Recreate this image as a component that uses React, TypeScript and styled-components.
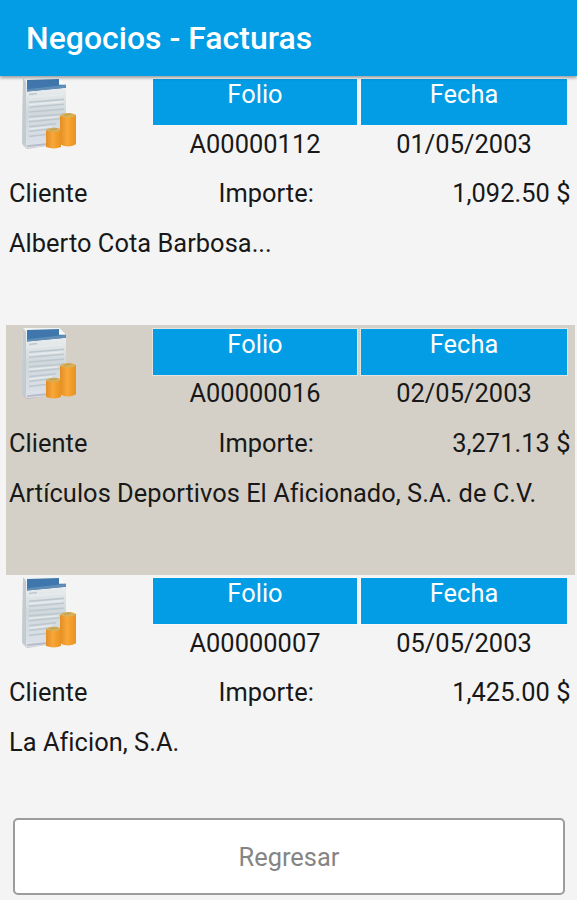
import React from "react";
import styled, { createGlobalStyle } from "styled-components";

const GlobalStyle = createGlobalStyle`
  html, body { margin: 0; padding: 0; background: #f4f4f4; }
  body { overflow: hidden; }
  *, *::before, *::after { box-sizing: border-box; }
`;

const Screen = styled.main`
  display: flex;
  flex-direction: column;
  height: 900px;
  overflow: hidden;
  background: #f4f4f4;
  color: #181818;
  font-family: Roboto, "Liberation Sans", sans-serif;
  font-size: 25.4px;
  letter-spacing: 0.04px;
  line-height: 30px;
`;

const AppBar = styled.header`
  display: flex;
  align-items: center;
  flex: none;
  height: 75.5px;
  padding: 0 26px;
  background: #029de4;
  box-shadow: 0 2px 3px rgba(0, 0, 0, 0.35);
  z-index: 1;
`;

const Title = styled.h1`
  margin: 0;
  color: #fff;
  font-size: 31.9px;
  font-weight: 500;
  line-height: 40px;
`;

const List = styled.section`
  flex: none;
`;

const Record = styled.article<{ $selected?: boolean }>`
  height: 249.5px;
  margin: 0 2px 0 6px;
  padding-top: 3.5px;
  background: ${(p) => (p.$selected ? "#d4d0c8" : "transparent")};
`;

const Summary = styled.div`
  display: grid;
  grid-template-columns: 143px 204px 206px;
  grid-template-rows: 46px 49px;
  column-gap: 4px;
`;

const IconCell = styled.div`
  grid-row: 1 / 3;
  padding-left: 14px;

  svg {
    display: block;
    margin-top: -3px;
  }
`;

const HeadCell = styled.div`
  text-align: center;
  color: #fff;
  background: #029de4;
  box-shadow: 0 0 0 1px rgba(255, 255, 255, 0.4);
`;

const ValueCell = styled.div`
  padding-top: 3.5px;
  text-align: center;
`;

const AmountRow = styled.div`
  display: grid;
  grid-template-columns: 209.5px 120px 1fr;
  padding: 4px 4.5px 0 3px;
`;

const Amount = styled.span`
  text-align: right;
`;

const Client = styled.div`
  padding: 20px 0 0 3px;
  white-space: nowrap;
`;

const BackButton = styled.button`
  flex: none;
  height: 77px;
  margin: -6px 12px 0 13px;
  padding: 0;
  border: 2px solid #9c9c9c;
  border-radius: 5px;
  background: #fff;
  color: #858585;
  font: inherit;
  letter-spacing: inherit;
`;

const InvoiceIcon = () => (
  <svg width="64" height="74" viewBox="0 0 64 76" preserveAspectRatio="none" aria-hidden="true">
    <defs>
      <linearGradient id="paper" x1="0" y1="0" x2="0" y2="1">
        <stop offset="0" stopColor="#f3f5f5" />
        <stop offset="0.5" stopColor="#d0d8dc" />
        <stop offset="1" stopColor="#dde1ea" />
      </linearGradient>
      <linearGradient id="coins" x1="0" y1="0" x2="1" y2="0">
        <stop offset="0" stopColor="#e18f26" />
        <stop offset="0.45" stopColor="#f9a738" />
        <stop offset="1" stopColor="#e8921f" />
      </linearGradient>
    </defs>
    <path d="M2 70 7 75 26 72 26 66Z" fill="#a9acb2" opacity=".65" />
    <path d="M3 2H39L46 9V70L7 74 2 69Z" fill="url(#paper)" />
    <path d="M3 2 6 6V73L2 69Z" fill="#c3cbd0" />
    <path d="M39 2V9H46Z" fill="#f9faf9" />
    <path d="M7 4 39 3V9H46V12L7 16Z" fill="#3f77ac" />
    <path d="M7 13.5 46 9V12L7 16Z" fill="#5f8db5" />
    <path d="M9 19 17 18M9 27 44 24M9 32 44 29M9 37 44 34M9 42 44 39M9 47 40 44M9 52 36 49M9 57 33 54M9 62 26 60" stroke="#bcc8ce" strokeWidth="1.6" />
    <path d="M9 22 43 19M9 29.5 43 26.5M9 44.5 38 42M9 54.5 32 52" stroke="#e6ebed" strokeWidth="1.4" />
    <path d="M7 72 26 70" stroke="#b7bbc7" strokeWidth="2" />
    <path d="M40 41Q48 36 56 40V70Q48 75 40 70Z" fill="url(#coins)" />
    <ellipse cx="48" cy="40.5" rx="7" ry="2.4" fill="#d9b054" />
    <path d="M26 56Q34 51 41 55V73Q34 76 26 73Z" fill="url(#coins)" />
    <ellipse cx="33.5" cy="55.5" rx="6.8" ry="2.3" fill="#d7ad56" />
    <path d="M44 40.5 51 39M30 55.5 37 54" stroke="#b79d5c" strokeWidth="1" />
  </svg>
);

const invoices = [
  { folio: "A00000112", date: "01/05/2003", amount: "1,092.50 $", client: "Alberto Cota Barbosa..." },
  { folio: "A00000016", date: "02/05/2003", amount: "3,271.13 $", client: "Artículos Deportivos El Aficionado, S.A. de C.V.", selected: true },
  { folio: "A00000007", date: "05/05/2003", amount: "1,425.00 $", client: "La Aficion, S.A." },
];

export default function App() {
  return (
    <>
      <GlobalStyle />
      <Screen>
        <AppBar>
          <Title>Negocios - Facturas</Title>
        </AppBar>
        <List>
          {invoices.map((item) => (
            <Record key={item.folio} $selected={item.selected}>
              <Summary>
                <IconCell>
                  <InvoiceIcon />
                </IconCell>
                <HeadCell>Folio</HeadCell>
                <HeadCell>Fecha</HeadCell>
                <ValueCell>{item.folio}</ValueCell>
                <ValueCell>{item.date}</ValueCell>
              </Summary>
              <AmountRow>
                <span>Cliente</span>
                <span>Importe:</span>
                <Amount>{item.amount}</Amount>
              </AmountRow>
              <Client>{item.client}</Client>
            </Record>
          ))}
        </List>
        <BackButton type="button">Regresar</BackButton>
      </Screen>
    </>
  );
}
